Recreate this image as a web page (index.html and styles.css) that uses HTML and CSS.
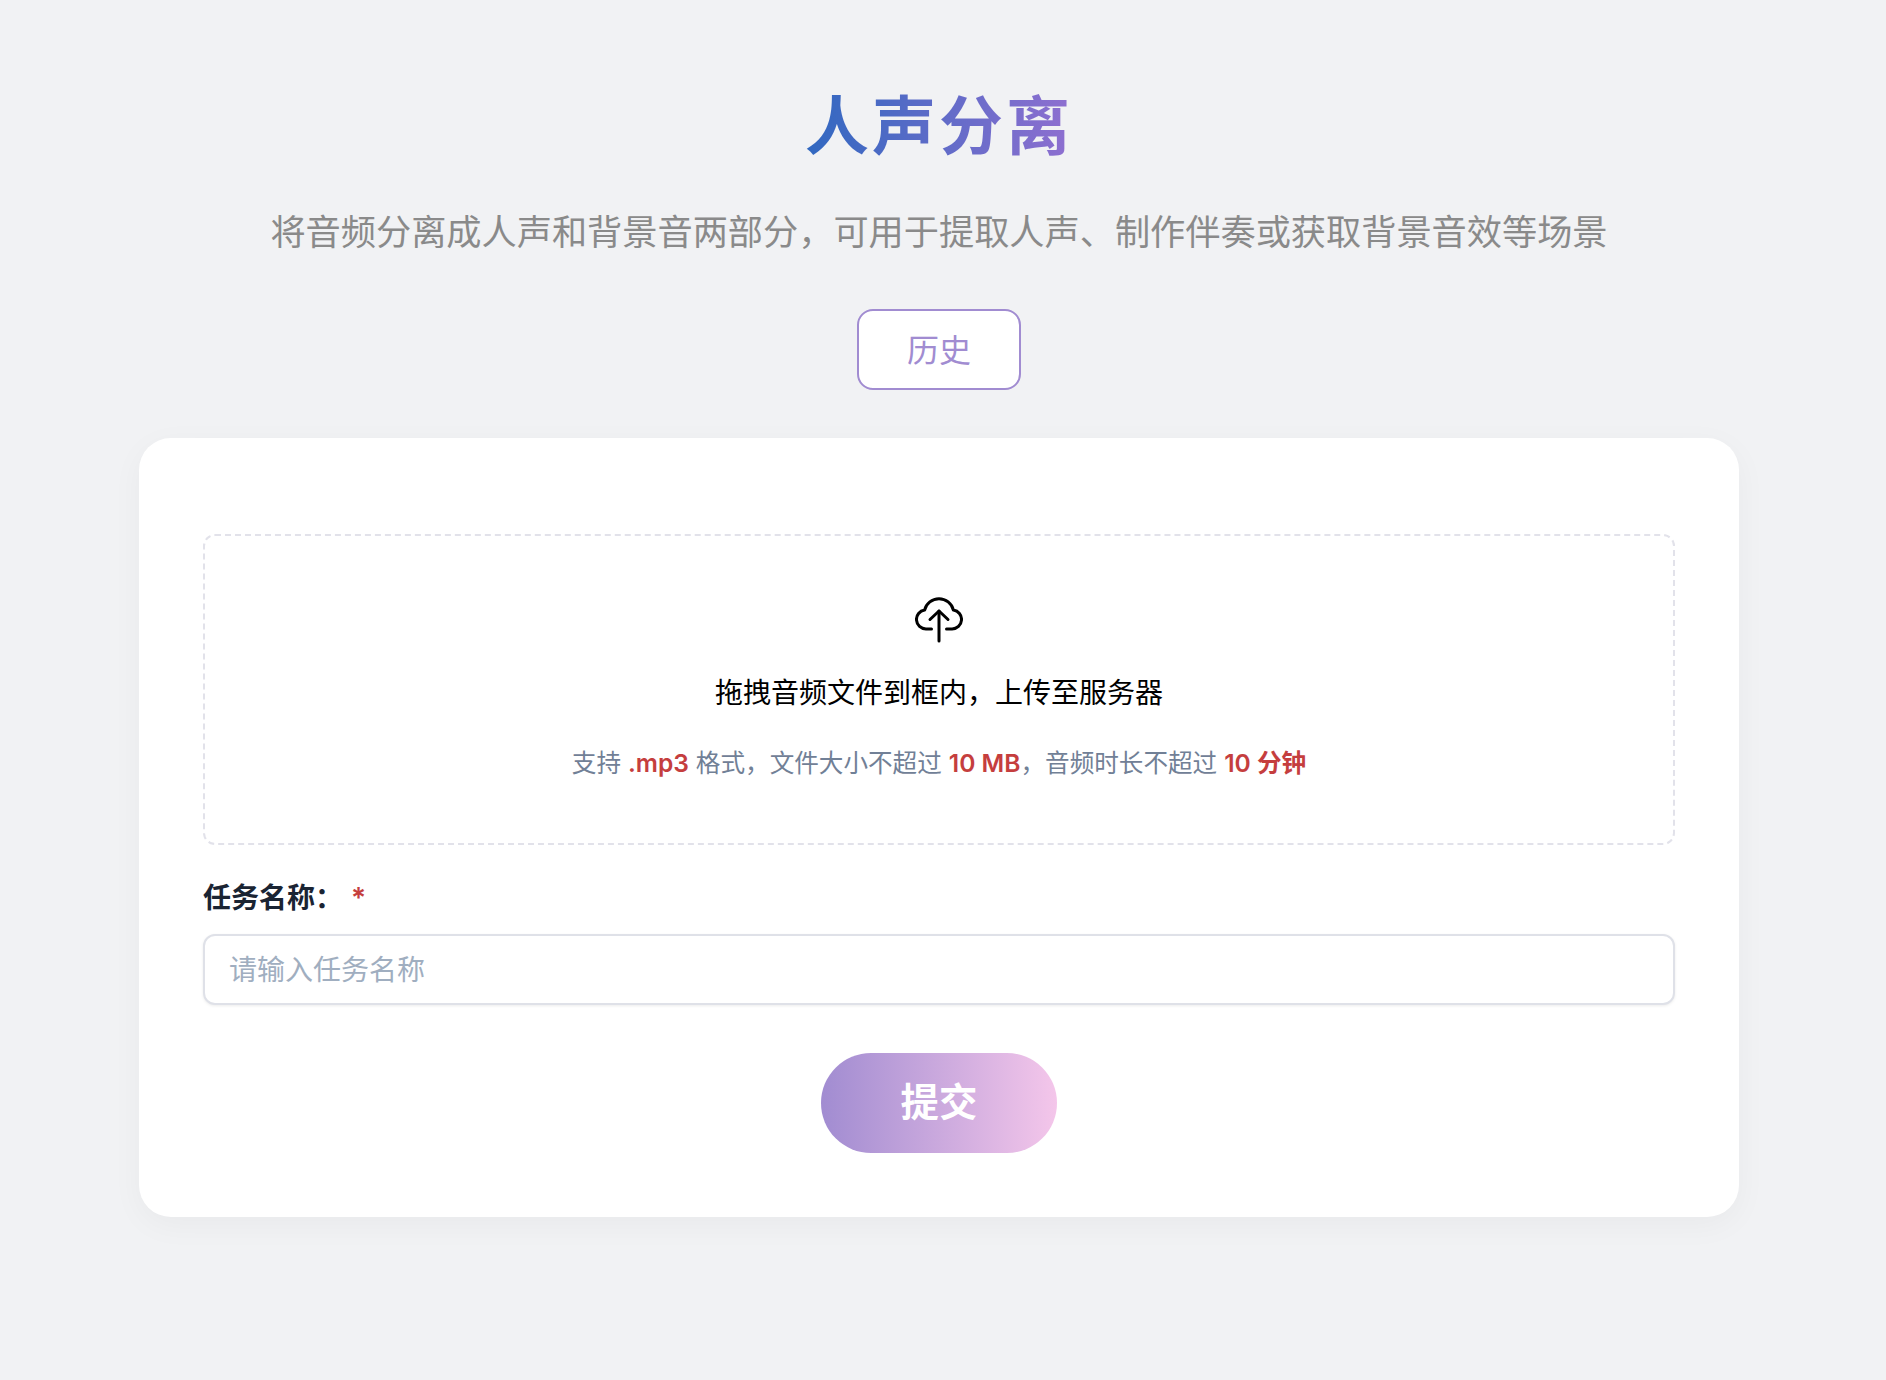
FILE: index.html
```html
<!DOCTYPE html>
<html lang="zh-CN">
<head>
    <meta charset="UTF-8">
    <meta name="viewport" content="width=device-width, initial-scale=1.0">
    <title>人声分离</title>
    <link rel="stylesheet" href="styles.css">
</head>
<body>
    <div class="page">
        <h1 class="title">人声分离</h1>
        <p class="subtitle">将音频分离成人声和背景音两部分，可用于提取人声、制作伴奏或获取背景音效等场景</p>
        <button type="button" class="history-button">历史</button>

        <form class="card">
            <div class="dropzone">
                <svg class="upload-icon" viewBox="0 0 48 48" fill="none" stroke="#000" stroke-width="3" stroke-linecap="round" stroke-linejoin="round">
                    <path d="M16.5 33H11A9.5 9.5 0 0 1 9.6 14.1A14.8 14.8 0 0 1 38.4 14.1A9.5 9.5 0 0 1 37 33H31.5"/>
                    <path d="M24 45V15"/>
                    <path d="M15 23.5L24 15L33 23.5"/>
                </svg>
                <p class="dropzone-text">拖拽音频文件到框内，上传至服务器</p>
                <p class="dropzone-hint">支持 <em>.mp3</em> 格式，文件大小不超过 <em>10 MB</em>，音频时长不超过 <em>10 分钟</em></p>
            </div>

            <div class="form-group">
                <label for="taskName">任务名称：<span class="required">*</span></label>
                <input type="text" id="taskName" name="taskName" placeholder="请输入任务名称">
            </div>

            <button type="submit" class="submit-button">提交</button>
        </form>
    </div>
</body>
</html>
```

FILE: styles.css
```css
* {
    box-sizing: border-box;
}

body {
    font-family: Inter, "Noto Sans CJK SC", sans-serif;
    background-color: #f1f2f4;
    margin: 0;
}

.page {
    display: flex;
    flex-direction: column;
    align-items: center;
    min-height: 1380px;
    padding: 78px 8px 0 0;
}

.title {
    font-size: 64px;
    line-height: 96px;
    font-weight: 700;
    letter-spacing: 3px;
    margin: 0;
    background: linear-gradient(90deg, #3068c0, #8f6fd0);
    -webkit-background-clip: text;
    background-clip: text;
    color: transparent;
}

.subtitle {
    font-size: 35.2px;
    line-height: 54px;
    font-weight: 400;
    color: #8a8a8a;
    margin: 31px 0 0;
}

.history-button {
    width: 164px;
    height: 81px;
    margin-top: 50px;
    padding: 0 0 4px;
    font-family: inherit;
    font-size: 32px;
    color: #a18cd1;
    background: #fff;
    border: 2px solid #a18cd1;
    border-radius: 16px;
    cursor: pointer;
}

.card {
    display: flex;
    flex-direction: column;
    align-items: center;
    width: 1600px;
    margin-top: 48px;
    padding: 96px 64px 64px;
    background: #fff;
    border-radius: 32px;
    box-shadow: 0 8px 32px rgba(0, 0, 0, 0.04);
}

.dropzone {
    width: 100%;
    height: 311px;
    padding-top: 60px;
    text-align: center;
    border: 2px dashed #e2e2ea;
    border-radius: 12px;
}

.upload-icon {
    display: block;
    width: 48px;
    height: 48px;
    margin: 0 auto;
}

.dropzone-text {
    font-size: 28px;
    line-height: 42px;
    color: #000;
    margin: 28px 0 0;
}

.dropzone-hint {
    font-size: 24.6px;
    line-height: 36px;
    color: #718096;
    margin: 31px 0 0;
}

.dropzone-hint em {
    font-style: normal;
    font-weight: 600;
    color: #c53e3e;
}

.form-group {
    width: 100%;
    margin-top: 32px;
}

label {
    display: block;
    font-size: 28px;
    line-height: 42px;
    font-weight: 600;
    color: #1a2433;
    margin-bottom: 15px;
}

.required {
    color: #c53e3e;
    margin-left: 8px;
}

input[type="text"] {
    display: block;
    width: 100%;
    height: 71px;
    padding: 0 24px;
    font-family: inherit;
    font-size: 28px;
    color: #1a2433;
    background: #fff;
    border: 2px solid #dfe1e8;
    border-radius: 12px;
    box-shadow: 0 1px 3px rgba(0, 0, 0, 0.08);
}

input[type="text"]::placeholder {
    color: #a0aec0;
}

.submit-button {
    width: 236px;
    height: 100px;
    margin-top: 48px;
    padding: 0 0 8px;
    font-family: inherit;
    font-size: 38.4px;
    font-weight: 700;
    color: #fff;
    background: linear-gradient(90deg, #a18cd1, #f4c6ea);
    border: none;
    border-radius: 50px;
    cursor: pointer;
}
```
